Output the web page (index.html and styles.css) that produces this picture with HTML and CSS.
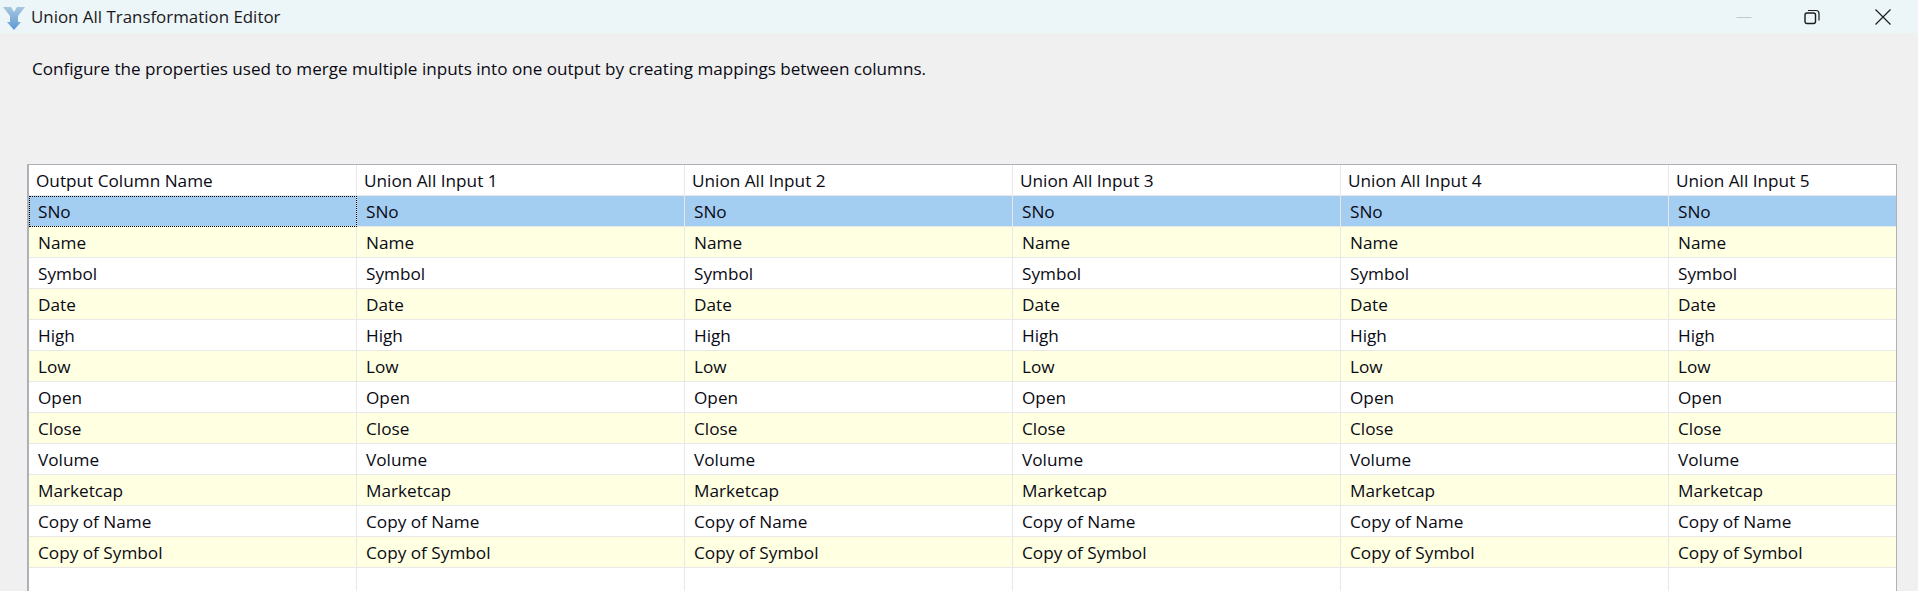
FILE: index.html
```html
<!DOCTYPE html>
<html lang="en">
<head>
    <meta charset="UTF-8">
    <title>Union All Transformation Editor</title>
    <link rel="stylesheet" href="styles.css">
</head>
<body>
    <div class="titlebar">
        <svg class="app-icon" width="26" height="30" viewBox="0 0 26 30">
            <defs>
                <linearGradient id="arrow" x1="0" y1="0" x2="0" y2="1">
                    <stop offset="0" stop-color="#a9c6de"/>
                    <stop offset="1" stop-color="#5c9ad6"/>
                </linearGradient>
            </defs>
            <path d="M1 5 L9 5 L12 10 L15 5 L23 5 L16 14 L16 20 L19 20 L12 28 L5 20 L8 20 L8 14 Z" fill="url(#arrow)"/>
        </svg>
        <span class="title">Union All Transformation Editor</span>
        <div class="win-buttons">
            <svg class="win-btn win-min" width="16" height="16" viewBox="0 0 16 16">
                <path d="M0.5 8.5 H15.5" stroke="#c4c8ca" fill="none"/>
            </svg>
            <svg class="win-btn" width="16" height="16" viewBox="0 0 16 16">
                <rect x="1" y="4" width="10.5" height="10.5" rx="2" stroke="#1c1c1c" stroke-width="1.4" fill="none"/>
                <path d="M4 1.5 H12 Q15 1.5 15 4.5 V11.5" stroke="#1c1c1c" stroke-width="1.2" fill="none"/>
            </svg>
            <svg class="win-btn" width="16" height="16" viewBox="0 0 16 16">
                <path d="M0.5 0.5 L15.5 15.5 M15.5 0.5 L0.5 15.5" stroke="#1c1c1c" stroke-width="1.2" fill="none"/>
            </svg>
        </div>
    </div>

    <p class="intro">Configure the properties used to merge multiple inputs into one output by creating mappings between columns.</p>

    <div class="grid-box">
        <table class="grid">
            <thead>
                <tr>
                    <th>Output Column Name</th>
                    <th>Union All Input 1</th>
                    <th>Union All Input 2</th>
                    <th>Union All Input 3</th>
                    <th>Union All Input 4</th>
                    <th>Union All Input 5</th>
                </tr>
            </thead>
            <tbody>
                <tr class="selected"><td class="current">SNo</td><td>SNo</td><td>SNo</td><td>SNo</td><td>SNo</td><td>SNo</td></tr>
                <tr class="alt"><td>Name</td><td>Name</td><td>Name</td><td>Name</td><td>Name</td><td>Name</td></tr>
                <tr><td>Symbol</td><td>Symbol</td><td>Symbol</td><td>Symbol</td><td>Symbol</td><td>Symbol</td></tr>
                <tr class="alt"><td>Date</td><td>Date</td><td>Date</td><td>Date</td><td>Date</td><td>Date</td></tr>
                <tr><td>High</td><td>High</td><td>High</td><td>High</td><td>High</td><td>High</td></tr>
                <tr class="alt"><td>Low</td><td>Low</td><td>Low</td><td>Low</td><td>Low</td><td>Low</td></tr>
                <tr><td>Open</td><td>Open</td><td>Open</td><td>Open</td><td>Open</td><td>Open</td></tr>
                <tr class="alt"><td>Close</td><td>Close</td><td>Close</td><td>Close</td><td>Close</td><td>Close</td></tr>
                <tr><td>Volume</td><td>Volume</td><td>Volume</td><td>Volume</td><td>Volume</td><td>Volume</td></tr>
                <tr class="alt"><td>Marketcap</td><td>Marketcap</td><td>Marketcap</td><td>Marketcap</td><td>Marketcap</td><td>Marketcap</td></tr>
                <tr><td>Copy of Name</td><td>Copy of Name</td><td>Copy of Name</td><td>Copy of Name</td><td>Copy of Name</td><td>Copy of Name</td></tr>
                <tr class="alt"><td>Copy of Symbol</td><td>Copy of Symbol</td><td>Copy of Symbol</td><td>Copy of Symbol</td><td>Copy of Symbol</td><td>Copy of Symbol</td></tr>
                <tr class="empty"><td></td><td></td><td></td><td></td><td></td><td></td></tr>
            </tbody>
        </table>
    </div>
</body>
</html>
```

FILE: styles.css
```css
*{
    margin: 0;
    padding: 0;
    box-sizing: border-box;
}
html, body{
    height: 100%;
}
body{
    background: #f0f0f0;
    color: #0a0a14;
    font-family: "Open Sans", "Noto Sans", sans-serif;
    font-size: 17.1px;
    overflow: hidden;
}
.titlebar{
    height: 33px;
    background: #ecf5f8;
    display: flex;
    align-items: center;
    padding-left: 2px;
}
.app-icon{
    flex: none;
}
.title{
    margin-left: 3px;
    font-size: 16.9px;
    color: #1a1a1a;
}
.win-buttons{
    margin-left: auto;
    display: flex;
    gap: 55px;
    padding-right: 27px;
}
.win-min{
    margin-right: -3px;
}
.intro{
    margin: 26px 0 0 32px;
    line-height: 20px;
}
.grid-box{
    margin: 85px 21px 0 27px;
    height: 427px;
    background: #fff;
    border: 1px solid #b0b0b8;
    border-width: 1px 1px 0 2px;
    overflow: hidden;
}
.grid{
    width: 100%;
    table-layout: fixed;
    border-collapse: separate;
    border-spacing: 0;
}
.grid th, .grid td{
    width: 328px;
    height: 31px;
    text-align: left;
    font-weight: normal;
    font-size: 17.2px;
    white-space: nowrap;
    border-right: 1px solid #e8e8e8;
    border-bottom: 1px solid #e8e8e8;
}
.grid th:last-child, .grid td:last-child{
    width: auto;
    border-right: 0;
}
.grid th{
    padding-left: 7px;
}
.grid td{
    padding-left: 9px;
}
.alt td{
    background: #ffffe1;
}
.selected td{
    background: #a3cdf1;
}
.selected td.current{
    outline: 1px dotted #000;
    outline-offset: -1px;
}
.empty td{
    height: 60px;
}
```
